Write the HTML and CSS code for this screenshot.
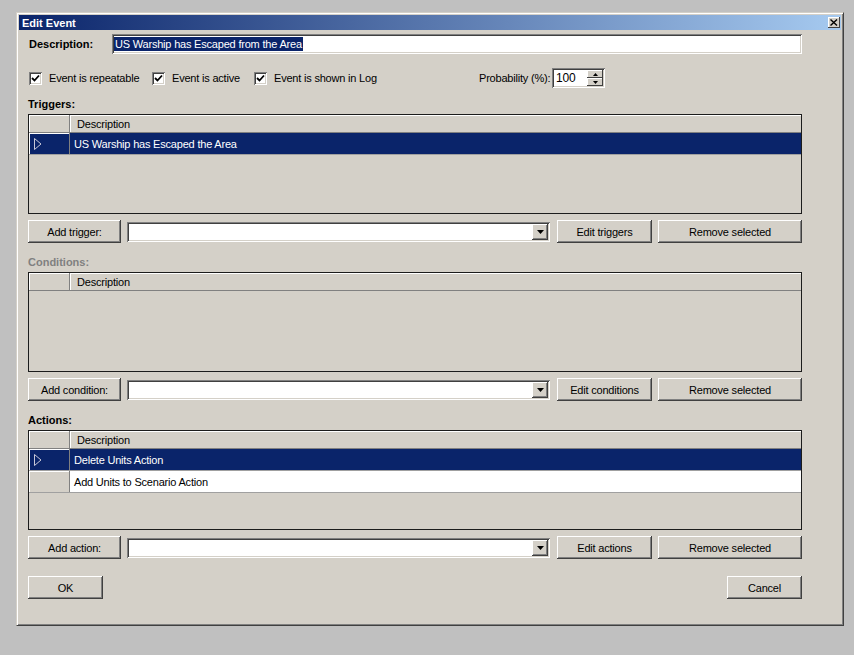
FILE: index.html
```html
<!DOCTYPE html>
<html lang="en">

<head>
  <meta charset="UTF-8">
  <title>Edit Event</title>
  <link rel="stylesheet" href="styles.css">
</head>

<body>
  <div class="dialog">
    <div class="titlebar">
      <span class="title">Edit Event</span>
      <span class="close-btn">
        <svg width="8" height="7" viewBox="0 0 8 7"><path d="M0.5 0.5 L7 6.5 M7 0.5 L0.5 6.5" stroke="#000" stroke-width="1.4"/></svg>
      </span>
    </div>

    <div class="content">
      <div class="desc-row">
        <span class="desc-label">Description:</span>
        <div class="textbox desc-box"><span class="selected-text">US Warship has Escaped from the Area</span></div>
      </div>

      <div class="options-row">
        <label class="check check-repeat">
          <span class="checkbox"><svg width="9" height="9" viewBox="0 0 9 9"><path d="M1 4 L3.5 6.5 L8 1.5" fill="none" stroke="#000" stroke-width="1.8"/></svg></span>
          Event is repeatable
        </label>
        <label class="check check-active">
          <span class="checkbox"><svg width="9" height="9" viewBox="0 0 9 9"><path d="M1 4 L3.5 6.5 L8 1.5" fill="none" stroke="#000" stroke-width="1.8"/></svg></span>
          Event is active
        </label>
        <label class="check check-log">
          <span class="checkbox"><svg width="9" height="9" viewBox="0 0 9 9"><path d="M1 4 L3.5 6.5 L8 1.5" fill="none" stroke="#000" stroke-width="1.8"/></svg></span>
          Event is shown in Log
        </label>
        <div class="probability">
          <span class="prob-label">Probability (%):</span>
          <div class="textbox spin">
            <span class="spin-value">100</span>
            <div class="spin-buttons">
              <span class="spin-btn"><svg width="5" height="3" viewBox="0 0 5 3"><path d="M2.5 0 L5 3 L0 3 Z" fill="#000"/></svg></span>
              <span class="spin-btn"><svg width="5" height="3" viewBox="0 0 5 3"><path d="M0 0 L5 0 L2.5 3 Z" fill="#000"/></svg></span>
            </div>
          </div>
        </div>
      </div>

      <div class="section first">
        <div class="section-title">Triggers:</div>
        <div class="grid">
          <div class="grid-row grid-head">
            <div class="row-head"></div>
            <div class="cell">Description</div>
          </div>
          <div class="grid-row selected">
            <div class="row-head"><svg width="8" height="12" viewBox="0 0 8 12"><path d="M0.5 0.5 L7 6 L0.5 11.5 Z" fill="none" stroke="#c8c8d8" stroke-width="1"/></svg></div>
            <div class="cell">US Warship has Escaped the Area</div>
          </div>
        </div>
        <div class="button-row">
          <button class="btn btn-add">Add trigger:</button>
          <div class="textbox combo">
            <span class="combo-arrow"><svg width="7" height="4" viewBox="0 0 7 4"><path d="M0 0 L7 0 L3.5 4 Z" fill="#000"/></svg></span>
          </div>
          <button class="btn btn-edit">Edit triggers</button>
          <button class="btn btn-remove">Remove selected</button>
        </div>
      </div>

      <div class="section">
        <div class="section-title disabled">Conditions:</div>
        <div class="grid">
          <div class="grid-row grid-head">
            <div class="row-head"></div>
            <div class="cell">Description</div>
          </div>
        </div>
        <div class="button-row">
          <button class="btn btn-add">Add condition:</button>
          <div class="textbox combo">
            <span class="combo-arrow"><svg width="7" height="4" viewBox="0 0 7 4"><path d="M0 0 L7 0 L3.5 4 Z" fill="#000"/></svg></span>
          </div>
          <button class="btn btn-edit">Edit conditions</button>
          <button class="btn btn-remove">Remove selected</button>
        </div>
      </div>

      <div class="section">
        <div class="section-title">Actions:</div>
        <div class="grid">
          <div class="grid-row grid-head">
            <div class="row-head"></div>
            <div class="cell">Description</div>
          </div>
          <div class="grid-row selected">
            <div class="row-head"><svg width="8" height="12" viewBox="0 0 8 12"><path d="M0.5 0.5 L7 6 L0.5 11.5 Z" fill="none" stroke="#c8c8d8" stroke-width="1"/></svg></div>
            <div class="cell">Delete Units Action</div>
          </div>
          <div class="grid-row">
            <div class="row-head"></div>
            <div class="cell">Add Units to Scenario Action</div>
          </div>
        </div>
        <div class="button-row">
          <button class="btn btn-add">Add action:</button>
          <div class="textbox combo">
            <span class="combo-arrow"><svg width="7" height="4" viewBox="0 0 7 4"><path d="M0 0 L7 0 L3.5 4 Z" fill="#000"/></svg></span>
          </div>
          <button class="btn btn-edit">Edit actions</button>
          <button class="btn btn-remove">Remove selected</button>
        </div>
      </div>

      <div class="footer">
        <button class="btn btn-footer">OK</button>
        <button class="btn btn-footer">Cancel</button>
      </div>
    </div>
  </div>
</body>

</html>
```

FILE: styles.css
```css
body {
  margin: 0;
  padding: 12px 0 0 16px;
  height: 655px;
  box-sizing: border-box;
  overflow: hidden;
  background-color: #c0c0c0;
  font-family: 'Liberation Sans', Tahoma, Arial, sans-serif;
  font-size: 11px;
  letter-spacing: -0.2px;
  color: #000;
}

.dialog {
  width: 828px;
  height: 614px;
  box-sizing: border-box;
  padding: 2px;
  background-color: #d4d0c8;
  border: 1px solid;
  border-color: #d4d0c8 #404040 #404040 #d4d0c8;
  box-shadow: inset 1px 1px #fff, inset -1px -1px #808080;
}

.titlebar {
  height: 15px;
  display: flex;
  align-items: center;
  justify-content: space-between;
  padding: 0 1px 0 3px;
  background: linear-gradient(to right, #0a246a, #a6caf0);
}

.title {
  color: white;
  font-weight: bold;
  letter-spacing: 0;
}

.close-btn {
  width: 12px;
  height: 11px;
  display: flex;
  align-items: center;
  justify-content: center;
  background-color: #d4d0c8;
  box-shadow: inset -1px -1px #404040, inset 1px 1px #fff;
}

.content {
  padding: 4px 0 0 9px;
}

/* sunken 3d field */
.textbox {
  box-sizing: border-box;
  height: 20px;
  background-color: white;
  box-shadow: inset 1px 1px #808080, inset -1px -1px #fff, inset 2px 2px #404040, inset -2px -2px #d4d0c8;
}

.desc-row {
  width: 774px;
  height: 20px;
  display: flex;
  align-items: center;
}

.desc-label {
  width: 84px;
  padding-left: 1px;
  box-sizing: border-box;
  font-weight: bold;
  letter-spacing: 0;
}

.desc-box {
  flex: 1;
  display: flex;
  align-items: center;
  padding: 0 2px;
}

.selected-text {
  background-color: #0a246a;
  color: white;
  line-height: 14px;
  padding: 0 1px;
}

.options-row {
  margin-top: 14px;
  height: 20px;
  display: flex;
  align-items: center;
}

.check {
  display: flex;
  align-items: center;
  gap: 7px;
  box-sizing: border-box;
  padding-left: 1px;
}

.check-repeat {
  width: 123px;
}

.check-active {
  width: 102px;
}

.check-log {
  width: 226px;
}

.checkbox {
  width: 13px;
  height: 13px;
  display: flex;
  align-items: center;
  justify-content: center;
  background-color: white;
  box-shadow: inset 1px 1px #808080, inset -1px -1px #fff, inset 2px 2px #404040, inset -2px -2px #d4d0c8;
}

.probability {
  display: flex;
  align-items: center;
}

.prob-label {
  width: 73px;
}

.spin {
  width: 53px;
  display: flex;
  align-items: stretch;
  padding: 2px;
}

.spin-value {
  flex: 1;
  padding-left: 2px;
  font-size: 12px;
  line-height: 16px;
}

.spin-buttons {
  width: 16px;
  display: flex;
  flex-direction: column;
}

.spin-btn {
  flex: 1;
  display: flex;
  align-items: center;
  justify-content: center;
  background-color: #d4d0c8;
  box-shadow: inset -1px -1px #404040, inset 1px 1px #fff;
}

.section {
  width: 774px;
}

.section-title {
  margin-top: 12px;
  margin-bottom: 3px;
  height: 14px;
  line-height: 14px;
  font-weight: bold;
  letter-spacing: 0;
}

.section.first .section-title {
  margin-top: 9px;
}

.section-title.disabled {
  color: #808080;
}

.grid {
  height: 100px;
  box-sizing: border-box;
  border: 1px solid #1c1c1c;
  background-color: #d4d0c8;
}

.grid-row {
  height: 22px;
  box-sizing: border-box;
  display: flex;
  border-bottom: 1px solid #a0a0a0;
}

.grid-row .cell {
  flex: 1;
  display: flex;
  align-items: center;
  padding-left: 4px;
  background-color: white;
}

.row-head {
  width: 41px;
  box-sizing: border-box;
  display: flex;
  align-items: center;
  padding-left: 5px;
  border-right: 1px solid #808080;
  background-color: #d4d0c8;
  box-shadow: inset 1px 1px #fff;
}

.grid-head {
  height: 18px;
  border-bottom-color: #808080;
}

.grid-head .cell {
  padding-left: 7px;
  background-color: #d4d0c8;
  box-shadow: inset 1px 1px #fff;
}

.grid-row.selected .cell,
.grid-row.selected .row-head {
  background-color: #0a246a;
  color: white;
}

.button-row {
  margin-top: 6px;
  height: 23px;
  display: flex;
  align-items: center;
  gap: 6px;
}

.btn {
  height: 23px;
  padding: 0;
  border: none;
  background-color: #d4d0c8;
  font-family: inherit;
  font-size: 11px;
  letter-spacing: -0.2px;
  color: #000;
  box-shadow: inset -1px -1px #404040, inset 1px 1px #fff, inset -2px -2px #808080, inset 2px 2px #d4d0c8;
}

.btn-add {
  width: 93px;
}

.btn-edit {
  width: 95px;
  margin-left: 1px;
}

.btn-remove {
  width: 144px;
}

.combo {
  flex: 1;
  display: flex;
  justify-content: flex-end;
  padding: 2px;
}

.combo-arrow {
  width: 16px;
  display: flex;
  align-items: center;
  justify-content: center;
  background-color: #d4d0c8;
  box-shadow: inset -1px -1px #404040, inset 1px 1px #fff, inset -2px -2px #808080;
}

.footer {
  width: 774px;
  margin-top: 17px;
  display: flex;
  justify-content: space-between;
}

.btn-footer {
  width: 75px;
}
```
